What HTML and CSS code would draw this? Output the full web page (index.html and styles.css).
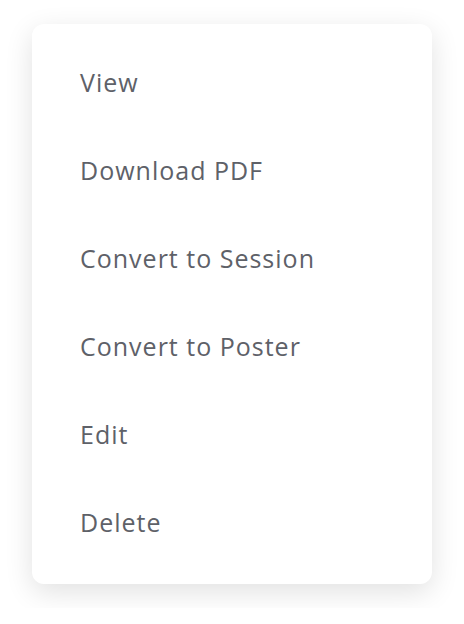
FILE: index.html
```html
<!DOCTYPE html>
<html lang="en">

<head>
    <meta charset="UTF-8">
    <meta name="viewport" content="width=device-width, initial-scale=1.0">
    <title>Menu</title>
    <link rel="stylesheet" href="styles.css">
</head>

<body>
    <ul class="menu">
        <li class="menu-item">View</li>
        <li class="menu-item">Download PDF</li>
        <li class="menu-item">Convert to Session</li>
        <li class="menu-item">Convert to Poster</li>
        <li class="menu-item">Edit</li>
        <li class="menu-item">Delete</li>
    </ul>
</body>

</html>
```
FILE: styles.css
```css
body {
    margin: 0;
    padding: 24px 32px;
    background: #ffffff;
    font-family: "Open Sans", Lato, sans-serif;
}

.menu {
    list-style: none;
    margin: 0;
    padding: 16px 0;
    width: 400px;
    box-sizing: border-box;
    background: #ffffff;
    border-radius: 12px;
    box-shadow: 0 8px 28px rgba(0, 0, 0, 0.12);
}

.menu-item {
    height: 88px;
    box-sizing: border-box;
    display: flex;
    align-items: center;
    padding: 0 48px 4px;
    font-size: 25px;
    letter-spacing: 1px;
    color: #5e6168;
}
```
